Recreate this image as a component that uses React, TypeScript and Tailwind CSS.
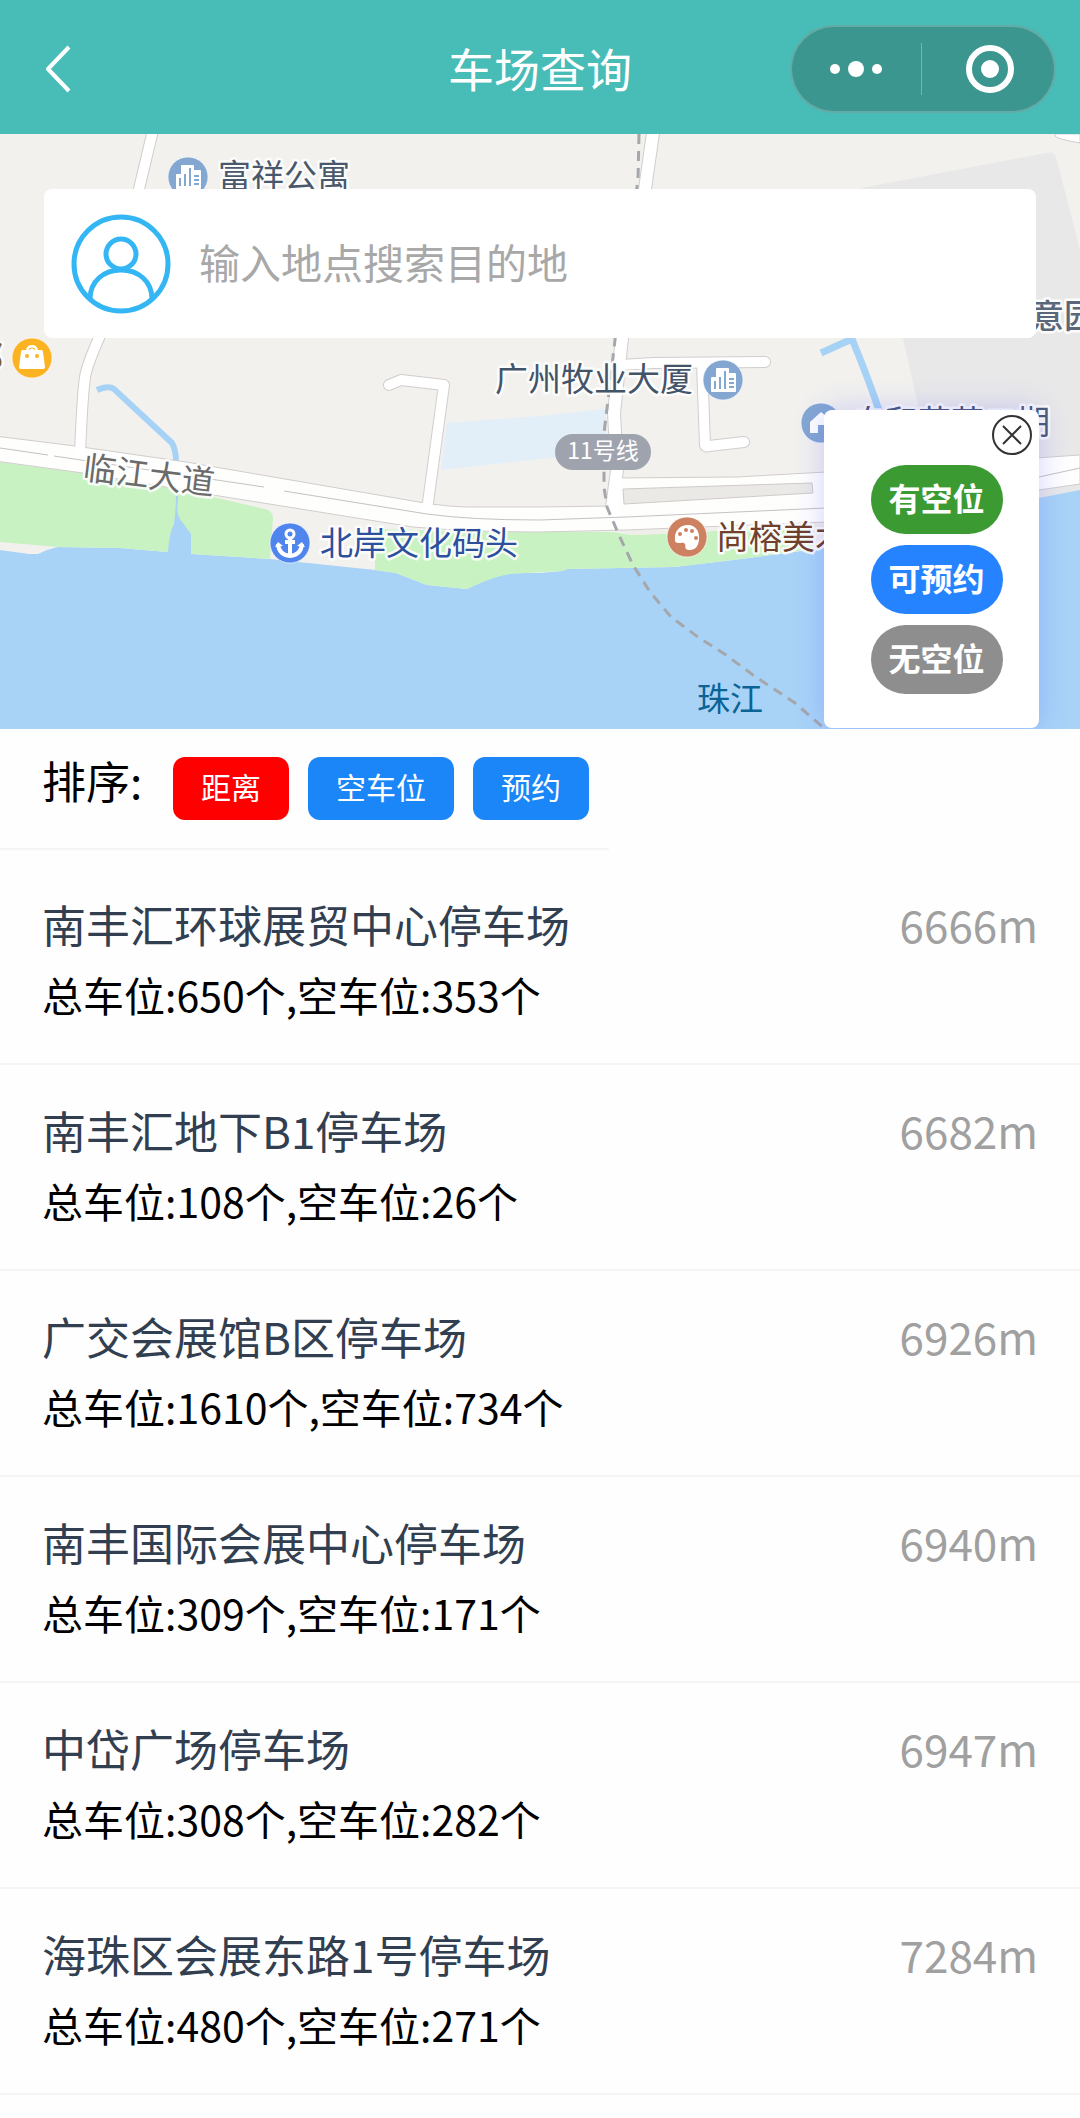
import React from "react";

type Lot = { name: string; total: number; free: number; distance: number };

const lots: Lot[] = [
  { name: "南丰汇环球展贸中心停车场", total: 650, free: 353, distance: 6666 },
  { name: "南丰汇地下B1停车场", total: 108, free: 26, distance: 6682 },
  { name: "广交会展馆B区停车场", total: 1610, free: 734, distance: 6926 },
  { name: "南丰国际会展中心停车场", total: 309, free: 171, distance: 6940 },
  { name: "中岱广场停车场", total: 308, free: 282, distance: 6947 },
  { name: "海珠区会展东路1号停车场", total: 480, free: 271, distance: 7284 },
];

const sorts = [
  { label: "距离", tone: "bg-[#ff0000]" },
  { label: "空车位", tone: "bg-[#1a86f8]" },
  { label: "预约", tone: "bg-[#1a86f8]" },
];

const legend = [
  { label: "有空位", tone: "bg-[#3c9a33]" },
  { label: "可预约", tone: "bg-[#2583ff]" },
  { label: "无空位", tone: "bg-[#8e8e8e]" },
];

function Header() {
  return (
    <header className="grid h-[134px] grid-cols-[1fr_auto_1fr] items-center bg-[#48bcb6] px-6 pt-1 text-white">
      <button type="button" aria-label="返回" className="ml-4 flex h-16 w-10 items-center">
        <svg viewBox="0 0 40 56" className="h-14 w-10" fill="none" stroke="currentColor" strokeWidth="4">
          <path d="M29 6 8 28l21 22" strokeLinejoin="round" />
        </svg>
      </button>
      <h1 className="pb-1 text-[46px] leading-[60px]">车场查询</h1>
      <div className="flex h-[88px] w-[266px] items-center justify-self-end rounded-full border-2 border-white/20 bg-[#3c9690]">
        <button type="button" aria-label="更多" className="flex h-full flex-1 items-center justify-center">
          <svg viewBox="0 0 60 20" className="h-5 w-[60px]" fill="currentColor">
            <circle cx="9" cy="10" r="5" />
            <circle cx="30" cy="10" r="8" />
            <circle cx="51" cy="10" r="5" />
          </svg>
        </button>
        <span className="h-[52px] w-px bg-white/30" />
        <button type="button" aria-label="关闭小程序" className="flex h-full flex-1 items-center justify-center pl-1">
          <svg viewBox="0 0 50 50" className="h-[50px] w-[50px]">
            <circle cx="25" cy="25" r="21" fill="none" stroke="currentColor" strokeWidth="6" />
            <circle cx="25" cy="25" r="9" fill="currentColor" />
          </svg>
        </button>
      </div>
    </header>
  );
}

function Building({ x, y }: { x: number; y: number }) {
  return (
    <g transform={`translate(${x} ${y})`}>
      <circle r="20" fill="#84a7d2" stroke="#ffffff" strokeOpacity="0.6" strokeWidth="1" />
      <path
        d="M-12 -2q0-1 1-1h4v-8q0-1 1-1h11q1 0 1 1v4h6q1 0 1 1v17q0 1-1 1h-23q-1 0-1-1z"
        fill="#fff"
      />
      <path d="M-8 1v8M-3 -3v12M2 -9v18" stroke="#84a7d2" strokeWidth="2" />
      <path d="M6 -1h5M6 3h5M6 7h5" stroke="#84a7d2" strokeWidth="2" />
    </g>
  );
}

type LabelProps = { x: number; y: number; fill: string; children: string; weight?: number; size?: number; anchor?: "start" | "end"; turn?: number };

function Label({ x, y, fill, children, weight = 400, size = 33, anchor = "start", turn = 0 }: LabelProps) {
  return (
    <text
      x={x}
      y={y}
      fill={fill}
      fontSize={size}
      fontWeight={weight}
      textAnchor={anchor}
      transform={turn ? `rotate(${turn} ${x} ${y})` : undefined}
      stroke="#ffffff"
      strokeWidth="5"
      strokeOpacity="0.85"
      strokeLinejoin="round"
      paintOrder="stroke"
    >
      {children}
    </text>
  );
}

const sideRoads = [
  "M154 126 139 189 99 338 Q87 365 85 377 Q82 400 80 455",
  "M389 385 401 380 444 385 427 510",
  "M620 365 654 363 765 362",
  "M702 363 705 445Q706 447 709 446L744 442",
];

function CityMap() {
  return (
    <svg
      viewBox="0 134 1080 595"
      preserveAspectRatio="xMidYMid slice"
      className="block h-full w-full"
      role="img"
      aria-label="地图"
    >
      <rect y="134" width="1080" height="595" fill="#f2f1ee" />
      <path d="M862 188 1046 153Q1054 151 1056 157L1080 250V520H940L919 410 903 338Z" fill="#e8e8e9" />
      <path d="M447 423 540 416 606 409V453L540 459 441 470Z" fill="#e2eef8" />

      {/* river and banks */}
      <path d="M0 550 29 554H38Q48 549 58 547L120 548 168 552 192 554 270 559 375 570 396 573 427 585 467 589Q495 574 510 573L540 573 562 571 567 569 674 567 733 560 824 548 1039 498 1080 490V729H0Z" fill="#a8d3f7" />
      <path d="M0 462 83 473 165 487 178 493 213 497 265 509Q273 511 273 518L270 559 192 554 168 552 120 548 58 547 0 542Z" fill="#c9f2c3" />
      <path d="M375 570V529L480 532H614L630 535 691 533 800 524 812 549 733 560 674 567 567 569 562 571 510 574Q495 576 467 589L427 585 396 573Z" fill="#c9f2c3" />
      <path d="M616 530 630 535 691 533 824 520V529L616 530Z" fill="#efeee9" />

      {/* creeks */}
      <path d="M97 390Q108 385 114 389L172 443Q176 450 176 462" fill="none" stroke="#a6d2f5" strokeWidth="6" />
      <path d="M821 353 852 339Q865 370 879 410" fill="none" stroke="#a6d2f5" strokeWidth="7" />

      {/* side roads: casing then surface */}
      {sideRoads.map((d) => (
        <path key={d} d={d} fill="none" stroke="#d2cdcd" strokeWidth="12" strokeLinecap="round" strokeLinejoin="round" />
      ))}
      <path d="M654 126 645 189 622 338 614 413 617 470 611 515" fill="none" stroke="#d2cdcd" strokeWidth="14" />

      {/* riverside avenue */}
      <path
        d="M-5 436 75 446 186 462 413 501Q450 508 482 507L540 507 611 506 617 478 737 477 826 472 1080 455V484L1039 490 826 522 626 530 540 532Q470 532 413 527L213 495 83 473-5 461Z"
        fill="#fefefd"
        stroke="#d2cdcd"
        strokeWidth="1"
      />
      {sideRoads.map((d) => (
        <path key={d} d={d} fill="none" stroke="#ffffff" strokeWidth="10" strokeLinecap="round" strokeLinejoin="round" />
      ))}
      <path d="M654 126 645 189 622 338 614 413 617 470 611 515" fill="none" stroke="#ffffff" strokeWidth="12" />
      <path d="M623 489 812 483 813 493 624 504Z" fill="#eae9e6" stroke="#cfcaca" strokeWidth="1" />
      <path d="M0 448 48 455M54 456 264 487M284 491 427 514Q470 520 540 520L626 517 826 508M1039 477 1080 468" fill="none" stroke="#c4c2c2" strokeWidth="1" />
      <path d="M1055 134V136Q1057 139 1080 143V134Z" fill="#fff" stroke="#d2cdcd" strokeWidth="1" />
      <path d="M178 493V500Q175 515 183 523L191 534V555L168 553Q169 533 174 524 176 510 176 493Z" fill="#a8d3f7" />

      {/* metro line 11 */}
      <path
        d="M639 134 638 180 615 340 608 400 604 433V487L607 507 618 533 633 565 650 592 671 617 698 637 726 655 753 675 795 703 826 730"
        fill="none"
        stroke="#a5a7ab"
        strokeWidth="3"
        strokeDasharray="10 7"
      />

      <Label x={218} y={188} fill="#4a586b">富祥公寓</Label>
      <Building x={188} y={177} />

      <Label x={1031} y={328} fill="#5a677b" weight={500}>意园</Label>

      <Label x={3} y={369} fill="#7a5a30" anchor="end">都</Label>
      <g transform="translate(32 358)">
        <circle r="20" fill="#fbb322" stroke="#fff" strokeOpacity="0.6" />
        <path d="M-11-6Q-11-8-9-8H-6Q-5-13 0-13T6-8H9Q11-8 11-6L13 9Q13 11 11 11H-11Q-13 11-13 9Z" fill="#fff" />
        <path d="M-3-8Q-3-10 0-10T3-8" fill="none" stroke="#fbb322" strokeWidth="1" />
        <circle cx="-5" cy="-2" r="2" fill="#fbb322" />
        <circle cx="5" cy="-2" r="2" fill="#fbb322" />
      </g>

      <Label x={495} y={391} fill="#445468">广州牧业大厦</Label>
      <Building x={723} y={380} />

      <rect x="555" y="434" width="96" height="36" rx="18" fill="#9fa3ae" />
      <text x="603" y="459" fontSize="23" fill="#fff" textAnchor="middle">11号线</text>

      <Label x={82} y={479} fill="#6b6b6b" turn={7}>临江大道</Label>

      <Label x={320} y={555} fill="#2c4f9e">北岸文化码头</Label>
      <g transform="translate(290 543)">
        <circle r="20" fill="#5185ee" stroke="#fff" strokeOpacity="0.6" />
        <g fill="none" stroke="#fff" strokeWidth="4">
          <circle cy="-9" r="4" strokeWidth="3" />
          <path d="M0-5V12M-5-1H5" />
          <path d="M-12 1Q-11 12 0 13 11 12 12 1" />
        </g>
        <path d="M-15 4-12-1-7 3ZM15 4 12-1 7 3Z" fill="#fff" />
      </g>

      <Label x={716} y={549} fill="#70402d">尚榕美术馆</Label>
      <g transform="translate(687 537)">
        <circle r="20" fill="#ce8160" stroke="#fff" strokeOpacity="0.6" />
        <path d="M-12 3C-13-6-7-12 1-12S13-5 12 3 7 13 2 13-1 9-2 7-6 6-8 6-12 6-12 3Z" fill="#fff" />
        <circle cx="-7" cy="-3" r="2" fill="#ce8160" />
        <circle cx="-1" cy="-7" r="2" fill="#ce8160" />
        <circle cx="5" cy="-6" r="2" fill="#ce8160" />
        <circle cx="9" cy="1" r="2" fill="#ce8160" />
      </g>

      <text x="697" y="711" fontSize="33" fill="#0c6395">珠江</text>

      <Label x={852} y={434} fill="#4b5a78">自和花苑二期</Label>
      <g transform="translate(821 423)">
        <circle r="20" fill="#84a7d2" stroke="#fff" strokeOpacity="0.6" />
        <path d="M-11-1 0-11 5-7V-9H9V-4L12-1V10H3V2H-3V10H-11Z" fill="#fff" />
      </g>
    </svg>
  );
}

function SearchBox() {
  return (
    <label className="absolute inset-x-11 top-[55px] flex h-[149px] items-center gap-7 rounded-lg bg-white pl-[27px]">
      <svg viewBox="0 0 100 100" className="h-[100px] w-[100px] shrink-0" fill="none" stroke="#35b6f4" strokeWidth="5">
        <circle cx="50" cy="50" r="47" />
        <circle cx="50" cy="40" r="15" />
        <path d="M19 85C19 67 33 56 50 56S81 67 81 85" />
      </svg>
      <input
        type="text"
        aria-label="搜索目的地"
        placeholder="输入地点搜索目的地"
        className="h-full min-w-0 flex-1 bg-transparent pb-1.5 text-[41px] outline-none placeholder:text-[#a8a8a8]"
      />
    </label>
  );
}

function Legend() {
  return (
    <aside className="absolute right-[41px] bottom-px flex h-[318px] w-[215px] flex-col items-center gap-[11px] rounded-lg bg-white pt-[55px] pl-[10px] shadow-[0_0_30px_rgba(60,60,255,0.22)]">
      <button type="button" aria-label="关闭图例" className="absolute top-1 right-[6px]">
        <svg viewBox="0 0 42 42" className="h-[42px] w-[42px]" fill="none" stroke="#333" strokeWidth="2">
          <circle cx="21" cy="21" r="19" />
          <path d="M12 12 30 30M30 12 12 30" />
        </svg>
      </button>
      {legend.map((item) => (
        <span
          key={item.label}
          className={`flex h-[69px] w-[132px] items-center justify-center rounded-full pb-1.5 text-[32px] leading-none font-bold text-white ${item.tone}`}
        >
          {item.label}
        </span>
      ))}
    </aside>
  );
}

export default function App() {
  return (
    <div className="min-h-screen bg-[#fefefe] font-['Noto_Sans_CJK_SC',sans-serif] text-black">
      <Header />
      <section className="relative h-[595px] overflow-hidden">
        <CityMap />
        <SearchBox />
        <Legend />
      </section>
      <main>
        <div className="flex h-[121px] w-fit items-start border-b-2 border-[#f5f5f5] pt-7 pr-5 pl-[42px]">
          <span className="w-[131px] text-[44px] leading-[46px]">排序:</span>
          <div className="flex gap-[19px]">
            {sorts.map((sort) => (
              <button
                key={sort.label}
                type="button"
                className={`h-[63px] rounded-xl px-7 pb-1.5 text-[30px] leading-none text-white ${sort.tone}`}
              >
                {sort.label}
              </button>
            ))}
          </div>
        </div>
        <ul className="pt-[9px]">
          {lots.map((lot) => (
            <li key={lot.name} className="flex h-[206px] items-start justify-between border-b-2 border-[#f5f5f5] px-[42px] pt-[34px]">
              <div>
                <h2 className="text-[44px] leading-[62px] text-[#323f50]">{lot.name}</h2>
                <p className="mt-2 text-[41px] leading-[62px]">
                  总车位:{lot.total}个,空车位:{lot.free}个
                </p>
              </div>
              <span className="text-[44px] leading-[62px] text-[#a0a0a0]">{lot.distance}m</span>
            </li>
          ))}
        </ul>
      </main>
    </div>
  );
}
